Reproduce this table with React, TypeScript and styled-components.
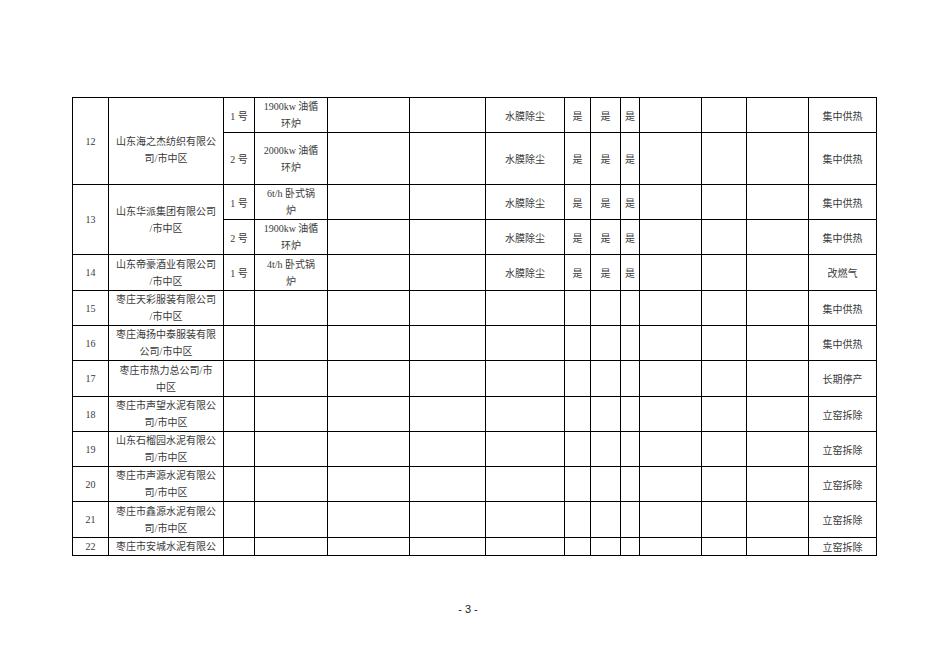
import React from "react";
import styled, { createGlobalStyle } from "styled-components";

const Global = createGlobalStyle`
  html, body { margin: 0; padding: 0; background: #fff; }
  body { width: 936px; height: 662px; overflow: hidden; }
`;

const Page = styled.div`
  width: 936px;
  height: 662px;
  box-sizing: border-box;
  padding: 97px 61px 0 72px;
  display: flex;
  flex-direction: column;
  font-family: "Liberation Serif", "Noto Sans CJK SC", serif;
  color: #3a3a3a;
`;

const Table = styled.table`
  border-collapse: collapse;
  table-layout: fixed;
  width: 803px;
  font-size: 10px;
`;

const Row = styled.tr<{ $h: number }>`
  height: ${(p) => p.$h}px;
`;

const Cell = styled.td`
  border: 1px solid #000;
  padding: 0;
  text-align: center;
  vertical-align: middle;
  white-space: nowrap;
  overflow: hidden;
`;

const Line = styled.div`
  line-height: 17px;
  min-height: 17px;
`;

const Footer = styled.div`
  margin-top: 45px;
  margin-left: -72px;
  width: 936px;
  text-align: center;
  font-family: "Liberation Sans", Arial, sans-serif;
  font-size: 11px;
  line-height: 16px;
  color: #222;
`;

const widths = [36, 115, 31, 73, 82, 76, 79, 26, 30, 19, 62, 45, 62, 68];

type Sub = {
  h: number;
  unit?: string;
  boiler?: string[];
  dust?: string;
  yes?: boolean;
  result: string;
};

type Group = { no: string; company: string[]; subs: Sub[] };

const groups: Group[] = [
  {
    no: "12",
    company: ["", "山东海之杰纺织有限公", "司/市中区"],
    subs: [
      { h: 35, unit: "1 号", boiler: ["1900kw 油循", "环炉"], dust: "水膜除尘", yes: true, result: "集中供热" },
      { h: 52, unit: "2 号", boiler: ["2000kw 油循", "环炉"], dust: "水膜除尘", yes: true, result: "集中供热" },
    ],
  },
  {
    no: "13",
    company: ["山东华派集团有限公司", "/市中区"],
    subs: [
      { h: 35, unit: "1 号", boiler: ["6t/h 卧式锅", "炉"], dust: "水膜除尘", yes: true, result: "集中供热" },
      { h: 35, unit: "2 号", boiler: ["1900kw 油循", "环炉"], dust: "水膜除尘", yes: true, result: "集中供热" },
    ],
  },
  {
    no: "14",
    company: ["山东帝豪酒业有限公司", "/市中区"],
    subs: [{ h: 36, unit: "1 号", boiler: ["4t/h 卧式锅", "炉"], dust: "水膜除尘", yes: true, result: "改燃气" }],
  },
  { no: "15", company: ["枣庄天彩服装有限公司", "/市中区"], subs: [{ h: 35, result: "集中供热" }] },
  { no: "16", company: ["枣庄海扬中泰服装有限", "公司/市中区"], subs: [{ h: 35, result: "集中供热" }] },
  { no: "17", company: ["枣庄市热力总公司/市", "中区"], subs: [{ h: 36, result: "长期停产" }] },
  { no: "18", company: ["枣庄市声望水泥有限公", "司/市中区"], subs: [{ h: 35, result: "立窑拆除" }] },
  { no: "19", company: ["山东石榴园水泥有限公", "司/市中区"], subs: [{ h: 35, result: "立窑拆除" }] },
  { no: "20", company: ["枣庄市声源水泥有限公", "司/市中区"], subs: [{ h: 35, result: "立窑拆除" }] },
  { no: "21", company: ["枣庄市鑫源水泥有限公", "司/市中区"], subs: [{ h: 36, result: "立窑拆除" }] },
  { no: "22", company: ["枣庄市安城水泥有限公"], subs: [{ h: 17, result: "立窑拆除" }] },
];

const Lines = ({ items }: { items?: string[] }) => (
  <>
    {(items ?? []).map((t, i) => (
      <Line key={i}>{t}</Line>
    ))}
  </>
);

export default function App() {
  return (
    <Page>
      <Global />
      <Table>
        <colgroup>
          {widths.map((w, i) => (
            <col key={i} style={{ width: w }} />
          ))}
        </colgroup>
        <tbody>
          {groups.map((g) =>
            g.subs.map((s, si) => (
              <Row key={g.no + "-" + si} $h={s.h}>
                {si === 0 && (
                  <>
                    <Cell rowSpan={g.subs.length}>{g.no}</Cell>
                    <Cell rowSpan={g.subs.length}>
                      <Lines items={g.company} />
                    </Cell>
                  </>
                )}
                <Cell>{s.unit}</Cell>
                <Cell>
                  <Lines items={s.boiler} />
                </Cell>
                <Cell />
                <Cell />
                <Cell>{s.dust}</Cell>
                <Cell>{s.yes ? "是" : ""}</Cell>
                <Cell>{s.yes ? "是" : ""}</Cell>
                <Cell>{s.yes ? "是" : ""}</Cell>
                <Cell />
                <Cell />
                <Cell />
                <Cell>{s.result}</Cell>
              </Row>
            ))
          )}
        </tbody>
      </Table>
      <Footer>- 3 -</Footer>
    </Page>
  );
}
